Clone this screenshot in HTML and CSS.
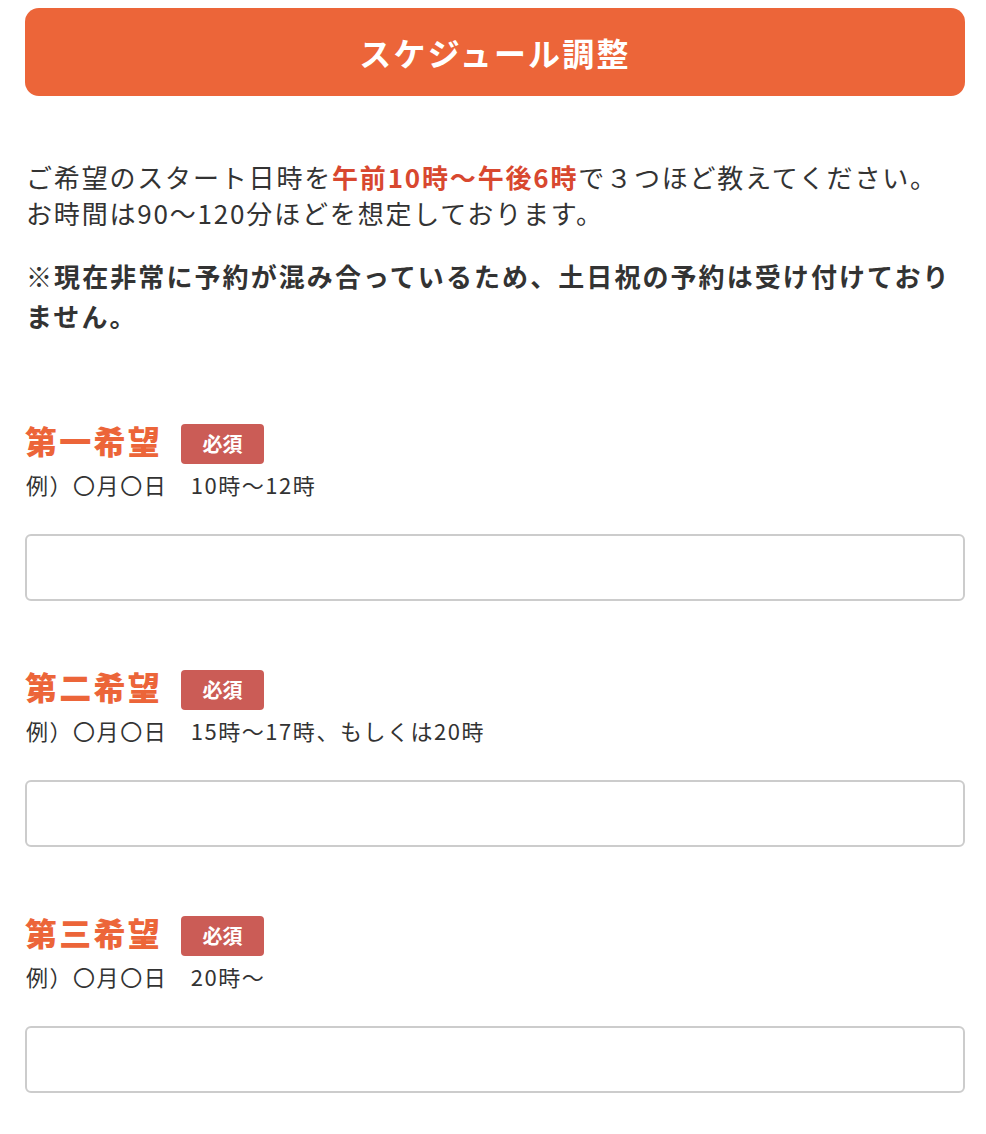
FILE: index.html
```html
<!DOCTYPE html>
<html lang="ja">
<head>
    <meta charset="UTF-8">
    <meta name="viewport" content="width=device-width, initial-scale=1.0">
    <title>スケジュール調整</title>
    <link rel="stylesheet" href="styles.css">
</head>
<body>
    <div class="schedule-form">
        <h1 class="form-title">スケジュール調整</h1>

        <p class="intro">ご希望のスタート日時を<span class="hl">午前10時〜午後6時</span>で３つほど教えてください。<br>お時間は90〜120分ほどを想定しております。</p>
        <p class="notice">※現在非常に予約が混み合っているため、土日祝の予約は受け付けておりません。</p>

        <div class="field">
            <div class="field-head">
                <h2 class="field-label">第一希望</h2>
                <span class="badge">必須</span>
            </div>
            <div class="example">例）〇月〇日　10時〜12時</div>
            <input type="text" class="field-input">
        </div>

        <div class="field">
            <div class="field-head">
                <h2 class="field-label">第二希望</h2>
                <span class="badge">必須</span>
            </div>
            <div class="example">例）〇月〇日　15時〜17時、もしくは20時</div>
            <input type="text" class="field-input">
        </div>

        <div class="field">
            <div class="field-head">
                <h2 class="field-label">第三希望</h2>
                <span class="badge">必須</span>
            </div>
            <div class="example">例）〇月〇日　20時〜</div>
            <input type="text" class="field-input">
        </div>
    </div>
</body>
</html>
```

FILE: styles.css
```css
:root {
    --orange: #EC6539;
    --red: #D8482F;
    --badge: #CB5C56;
    --text: #333333;
    --line: #CCCCCC;
}

body {
    margin: 0;
    background-color: #FFFFFF;
    color: var(--text);
    font-family: "Noto Sans CJK JP", "Noto Sans", sans-serif;
}

.schedule-form {
    padding: 8px 21px 40px 25px;
}

.form-title {
    margin: 0;
    height: 88px;
    line-height: 88px;
    border-radius: 14px;
    background-color: var(--orange);
    color: #FFFFFF;
    font-size: 32px;
    font-weight: bold;
    letter-spacing: 0.07em;
    text-align: center;
}

.intro {
    margin: 63px 0 0 1px;
    font-size: 26px;
    line-height: 36px;
    letter-spacing: 0.07em;
}

.hl {
    color: var(--red);
    font-weight: bold;
}

.notice {
    margin: 25px 0 0 1px;
    font-size: 26px;
    line-height: 40px;
    font-weight: bold;
    letter-spacing: 0.08em;
}

.field {
    margin-top: 88px;
}

.field + .field {
    margin-top: 69px;
}

.field-head {
    display: flex;
    align-items: center;
    gap: 19px;
    height: 40px;
}

.field-label {
    margin: 0;
    color: var(--orange);
    font-size: 32px;
    line-height: 40px;
    font-weight: 900;
    letter-spacing: 0.07em;
    position: relative;
    top: -4px;
}

.badge {
    width: 83px;
    height: 40px;
    line-height: 40px;
    border-radius: 4px;
    background-color: var(--badge);
    color: #FFFFFF;
    font-size: 20px;
    font-weight: bold;
    text-align: center;
}

.example {
    margin: 5px 0 0 1px;
    font-size: 22px;
    line-height: 30px;
    letter-spacing: 0.07em;
}

.field-input {
    display: block;
    box-sizing: border-box;
    width: 100%;
    height: 67px;
    margin-top: 35px;
    border: 2px solid var(--line);
    border-radius: 6px;
    background-color: #FFFFFF;
    font-size: 22px;
}
```
